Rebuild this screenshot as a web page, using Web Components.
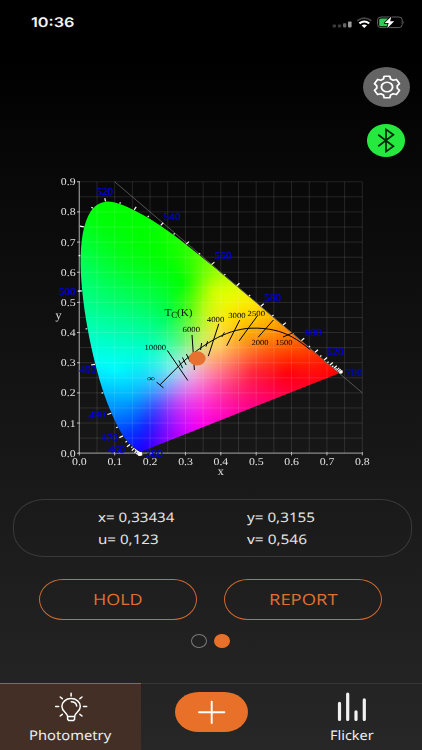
<!DOCTYPE html>
<html lang="en">
<head>
<meta charset="utf-8">
<title>Photometry</title>
<style>
    body{
        margin: 0;
        background: #000;
    }
</style>
</head>
<body>
<photometry-app></photometry-app>

<script>
/**
 * FitLabel draws one line of text stretched to a given width.
 * The bottom of the box is the baseline.
 *
 * @customElement
 */
class FitLabel extends HTMLElement{
    constructor(){
        super();
        this.attachShadow({mode: 'open'});
    }

    connectedCallback(){
        const width = this.getAttribute('width');
        const size = this.getAttribute('size') || 13.2;
        const family = this.getAttribute('family') || 'Noto Sans';
        const weight = this.getAttribute('weight') || 400;

        this.shadowRoot.innerHTML = `
            <style>
                :host{
                    display: block;
                    width: ${width}px;
                    height: ${size}px;
                }
                svg{
                    display: block;
                    overflow: visible;
                }
                text{
                    fill: currentColor;
                    font: ${weight} ${size}px "${family}", sans-serif;
                    text-rendering: geometricPrecision;
                }
            </style>
            <svg width="${width}" height="${size}">
                <text x="0" y="${size}" textLength="${width}" lengthAdjust="spacingAndGlyphs">${this.getAttribute('text')}</text>
            </svg>
        `
    }
}

customElements.define('fit-label', FitLabel)

/**
 * StatusBar shows the clock, the signal, the wifi and the battery.
 *
 * @customElement
 */
class StatusBar extends HTMLElement{
    constructor(){
        super();
        this.attachShadow({mode: 'open'});
    }

    connectedCallback(){
        const style = `
            <style>
                :host{
                    display: flex;
                    justify-content: space-between;
                    align-items: flex-start;
                    box-sizing: border-box;
                    height: 66.7px;
                    padding: 14px 17px 0 31px;
                    color: #f4f4f4;
                }
                svg{
                    display: block;
                }
            </style>
        `
        const template = `
            <fit-label text="10:36" width="43.5" size="13.3" family="Inter" weight="600"></fit-label>
            <svg width="74" height="16" viewBox="331 13.4 74 16">
                <g>
                    <rect x="332.6" y="24" width="3.4" height="2.8" rx=".8" fill="#3c3c3c"/>
                    <rect x="337.8" y="24" width="3.4" height="2.8" rx=".8" fill="#3c3c3c"/>
                    <rect x="343" y="22.7" width="3.3" height="4.1" rx=".8" fill="#666"/>
                    <rect x="348" y="20.8" width="3.6" height="6" rx=".8" fill="#999"/>
                </g>
                <g fill="none" stroke-width="1.9">
                    <path d="M357.2 20.2Q364.3 14.9 371.4 20.2" stroke="#444"/>
                    <path d="M359.4 22.8Q364.3 19 369.2 22.8" stroke="#fff" stroke-width="2.1"/>
                </g>
                <path d="M361.6 24.9Q364.3 22.8 367 24.9L364.3 27.3Z" fill="#fff"/>
                <rect x="377.6" y="16.4" width="24.6" height="10.6" rx="3.4" ry="3" fill="none" stroke="#606060"/>
                <path d="M403.4 20.4Q405 21.7 403.4 23.3Z" fill="#606060"/>
                <rect x="379.2" y="17.8" width="9.6" height="7.9" rx="1.6" fill="#34c759"/>
                <path d="M391.4 15.8L384.6 22.4H388.6L387.2 27.6L394.2 20.6H390.1Z" fill="#fff" stroke="#000" stroke-width="1.6" paint-order="stroke" stroke-linejoin="round"/>
            </svg>
        `
        this.shadowRoot.innerHTML = style + template
    }
}

customElements.define('status-bar', StatusBar)

/**
 * RoundAction is an oval icon button. The icon goes in the slot.
 *
 * @customElement
 */
class RoundAction extends HTMLElement{
    constructor(){
        super();
        this.attachShadow({mode: 'open'});
    }

    connectedCallback(){
        this.shadowRoot.innerHTML = `
            <style>
                :host{
                    display: flex;
                    align-items: center;
                    justify-content: center;
                    border-radius: 50%;
                    background: var(--action-color, #666);
                }
                ::slotted(svg){
                    display: block;
                }
            </style>
            <slot></slot>
        `
    }
}

customElements.define('round-action', RoundAction)

// CIE 1931 spectral locus: wavelength, x, y
const LOCUS = [
    [380, .1741, .0050], [400, .1733, .0048], [410, .1726, .0048], [420, .1714, .0051],
    [430, .1689, .0069], [435, .1669, .0086], [440, .1644, .0109], [445, .1611, .0138],
    [450, .1566, .0177], [455, .1510, .0227], [460, .1440, .0297], [465, .1355, .0399],
    [470, .1241, .0578], [475, .1096, .0868], [480, .0913, .1327], [485, .0687, .2007],
    [490, .0454, .2950], [495, .0235, .4127], [500, .0082, .5384], [505, .0039, .6548],
    [510, .0139, .7502], [515, .0389, .8120], [520, .0743, .8338], [525, .1142, .8262],
    [530, .1547, .8059], [535, .1929, .7816], [540, .2296, .7543], [545, .2658, .7243],
    [550, .3016, .6923], [555, .3373, .6589], [560, .3731, .6245], [565, .4087, .5896],
    [570, .4441, .5547], [575, .4788, .5202], [580, .5125, .4866], [585, .5448, .4544],
    [590, .5752, .4242], [595, .6029, .3965], [600, .6270, .3725], [605, .6482, .3514],
    [610, .6658, .3340], [615, .6801, .3197], [620, .6915, .3083], [625, .7006, .2993],
    [630, .7079, .2920], [635, .7140, .2859], [640, .7190, .2809], [645, .7230, .2770],
    [650, .7260, .2740], [660, .7300, .2700], [700, .7347, .2653]
]

// colour anchors of the diagram: left, top, r, g, b
const ANCHORS = [
    // spectral edge, from green to red
    [90, 217, 0, 255, 10], [106, 203, 0, 255, 0], [145, 217, 0, 255, 0], [187, 247, 45, 255, 0],
    [200, 256, 85, 255, 0], [213, 267, 135, 255, 0], [225, 278, 185, 255, 0], [237, 289, 225, 252, 0],
    [253, 304, 255, 228, 0], [270, 322, 255, 172, 0], [287, 336, 255, 122, 0], [303, 345, 255, 82, 0],
    [320, 356, 255, 40, 0], [338, 373, 255, 0, 0],
    // purple line
    [303, 387, 255, 0, 42], [270, 400, 255, 0, 102], [237, 413, 255, 0, 165], [203, 425, 252, 0, 228],
    [187, 431, 215, 0, 255], [165, 441, 130, 0, 255], [142, 450, 25, 0, 255],
    // blue edge, back to green
    [120, 427, 0, 80, 255], [107, 398, 0, 170, 255], [100, 378, 0, 222, 255], [92, 362, 0, 252, 245],
    [88, 345, 0, 255, 212], [84, 323, 0, 255, 172], [82, 273, 0, 255, 102], [83, 235, 0, 255, 45],
    // inside
    [120, 260, 0, 255, 30], [153, 253, 0, 255, 0], [183, 283, 0, 255, 0], [160, 290, 0, 255, 50],
    [110, 305, 0, 255, 120], [137, 320, 0, 255, 135], [165, 318, 0, 252, 95], [120, 345, 0, 255, 200],
    [145, 350, 0, 255, 205], [115, 370, 0, 250, 255], [197, 283, 90, 255, 0], [190, 310, 90, 250, 20],
    [213, 290, 205, 255, 0], [203, 308, 180, 250, 20], [230, 305, 240, 245, 0], [180, 342, 95, 245, 130],
    [202, 340, 205, 238, 95], [218, 325, 248, 228, 40], [240, 320, 255, 205, 0], [247, 335, 255, 165, 10],
    [222, 345, 255, 200, 90], [213, 357, 255, 175, 115], [253, 350, 255, 115, 35], [287, 357, 255, 50, 0],
    [287, 373, 255, 0, 10], [253, 372, 255, 35, 60], [225, 370, 255, 112, 125], [235, 388, 255, 45, 120],
    [217, 386, 255, 75, 165], [207, 375, 250, 135, 180], [193, 385, 235, 130, 225],
    [190, 370, 225, 190, 225], [185, 360, 185, 228, 210], [170, 368, 120, 235, 235],
    [153, 378, 55, 205, 255], [130, 395, 0, 180, 255], [168, 388, 135, 150, 250],
    [183, 398, 215, 85, 240], [170, 405, 155, 65, 250], [153, 408, 55, 75, 255],
    [147, 425, 25, 35, 255], [130, 418, 0, 105, 255], [213, 405, 255, 35, 195], [193, 412, 235, 30, 240]
]

// text, left, baseline
const WAVE_LABELS = [
    ['520', 96, 195], ['540', 163.3, 219.8], ['560', 214.3, 258.8], ['580', 264, 301.4],
    ['600', 304.4, 336.2], ['620', 326.6, 355.2], ['700', 345.3, 376.2], ['500', 58.4, 294.5],
    ['490', 79.2, 373.2], ['480', 88.4, 418.2], ['470', 101, 441.4], ['460', 108, 452.8],
    ['380', 145.6, 457.2]
]

// text, left, baseline, width
const TEMP_LABELS = [
    ['10000', 144.5, 350.4, 21.6], ['6000', 182.6, 332.2, 17.4], ['4000', 206.8, 322, 17.6],
    ['3000', 228.2, 317.6, 17.4], ['2500', 247.6, 315.6, 17.4], ['2000', 251.4, 344.9, 17],
    ['1500', 275.4, 344.9, 17], ['∞', 146.8, 380.6, 8.4]
]

const ORIGIN_X = 79.3
const ORIGIN_Y = 453.2
const SCALE_X = 353.75
const SCALE_Y = 301.6
const TOP = 170

const toX = x => ORIGIN_X + x * SCALE_X
const toY = y => ORIGIN_Y - y * SCALE_Y

/**
 * Finds the weights that blend the anchors by distance.
 * Solves the system for the three channels at once.
 *
 * @returns {number[][]} one [r, g, b] weight for each anchor
 */
function anchorWeights(){
    const n = ANCHORS.length
    const rows = ANCHORS.map(a => [
        ...ANCHORS.map(b => Math.hypot(a[0] - b[0], a[1] - b[1])),
        a[2], a[3], a[4]
    ])
    for (let c = 0; c < n; c++) {
        let best = c
        for (let r = c + 1; r < n; r++) {
            if (Math.abs(rows[r][c]) > Math.abs(rows[best][c])) best = r
        }
        [rows[c], rows[best]] = [rows[best], rows[c]]
        for (let r = 0; r < n; r++) {
            if (r === c) continue
            const f = rows[r][c] / rows[c][c]
            for (let k = c; k < n + 3; k++) rows[r][k] -= f * rows[c][k]
        }
    }
    return rows.map((row, i) => [row[n] / row[i], row[n + 1] / row[i], row[n + 2] / row[i]])
}

/**
 * ChromaticityChart draws the CIE xy diagram with the measured point.
 * The colours are painted on a canvas, the axes and texts lie over it.
 *
 * @customElement
 */
class ChromaticityChart extends HTMLElement{
    constructor(){
        super();
        this.attachShadow({mode: 'open'});
    }

    connectedCallback(){
        const style = `
            <style>
                :host{
                    display: grid;
                    width: 422px;
                    height: 310px;
                }
                canvas, svg{
                    grid-area: 1 / 1;
                    display: block;
                    width: 422px;
                    height: 310px;
                }
                svg{
                    z-index: 1;
                }
                svg.back{
                    z-index: 0;
                }
                text{
                    font-family: "Liberation Serif", serif;
                    text-rendering: geometricPrecision;
                }
            </style>
        `
        const template = `
            <svg class="back" viewBox="0 ${TOP} 422 310">${this.grid()}</svg>
            <canvas width="422" height="310"></canvas>
            <svg viewBox="0 ${TOP} 422 310">
                ${this.axisLabels()}
                ${this.ticks()}
                ${this.planckian()}
                ${this.labels()}
                <ellipse cx="197.2" cy="358.4" rx="8.4" ry="7.1" fill="#e87030"/>
            </svg>
        `
        this.shadowRoot.innerHTML = style + template
        this.paint(this.shadowRoot.querySelector('canvas'))
    }

    grid(){
        let lines = ''
        for (let i = 1; i <= 16; i++) {
            lines += `<path d="M${toX(i * .05)} ${toY(.9)}V${toY(0)}"/>`
        }
        for (let i = 1; i <= 18; i++) {
            lines += `<path d="M${toX(0)} ${toY(i * .05)}H${toX(.8)}"/>`
        }
        return `
            <g stroke="#fff" stroke-opacity=".13" stroke-width=".9">${lines}</g>
            <path d="M${toX(.1)} ${toY(.9)}L${toX(.8)} ${toY(.2)}" stroke="#666" stroke-width=".8"/>
            <path d="M${toX(0)} ${toY(.9)}V${toY(0)}H${toX(.8)}" fill="none" stroke="#8a8a8a" stroke-width="1.3"/>
        `
    }

    axisLabels(){
        let out = ''
        for (let i = 0; i <= 9; i++) {
            const y = toY(i / 10)
            out += `<path d="M77 ${y}H80" stroke="#bbb"/>`
            out += `<text x="60.8" y="${y + 3.5}" textLength="14.8" lengthAdjust="spacingAndGlyphs">0.${i}</text>`
        }
        for (let i = 0; i <= 8; i++) {
            const x = toX(i / 10)
            out += `<path d="M${x} 452V455.4" stroke="#bbb"/>`
            out += `<text x="${x - 7.3}" y="465.4" textLength="14.8" lengthAdjust="spacingAndGlyphs">0.${i}</text>`
        }
        return `
            <g fill="#e0e0e0" font-size="10.4">
                ${out}
                <text x="217.8" y="474.6" font-size="12" textLength="6" lengthAdjust="spacingAndGlyphs">x</text>
                <text x="55.6" y="318.8" font-size="12" textLength="6" lengthAdjust="spacingAndGlyphs">y</text>
            </g>
        `
    }

    /**
     * Marks along the locus, one each 5 nm and a longer one each 10 nm.
     *
     * @returns {string}
     */
    ticks(){
        let out = ''
        LOCUS.forEach(([nm, x, y], i) => {
            const a = LOCUS[Math.max(i - 1, 0)]
            const b = LOCUS[Math.min(i + 1, LOCUS.length - 1)]
            let nx = -(b[2] - a[2])
            let ny = b[1] - a[1]
            const len = Math.hypot(nx, ny) || 1
            const size = nm % 10 ? .006 : .0125
            nx = nx / len
            ny = ny / len
            out += `<path d="M${toX(x + nx * .001)} ${toY(y + ny * .001)}L${toX(x + nx * size)} ${toY(y + ny * size)}"/>`
        })
        return `
            <g stroke="#fff" stroke-width="1.2">${out}</g>
            <circle cx="341" cy="372" r="1.8" fill="#fff"/>
            <circle cx="139.6" cy="454.2" r="1.9" fill="#fff"/>
        `
    }

    planckian(){
        return `
            <g fill="none" stroke="#000" stroke-width="1">
                <path d="M160 384.8L178.5 366.2C186 358.6 198 348.8 213.9 339.6C224 333.8 238 328.6 251 328.2C268 327.6 281 331 291 336.4C298 340 304.5 345 310.2 349.6"/>
                <path d="M156.6 382.2L163.4 387.8"/>
                <path d="M167.3 350.4L187.8 380.5"/>
                <path d="M192 335L194.4 370"/>
                <path d="M218.8 323.8L208.3 356.2"/>
                <path d="M239.8 320L226.7 345.8"/>
                <path d="M257.4 315.8L239 341"/>
                <path d="M273.4 320L258.2 337.2"/>
                <path d="M294.4 332.2L283 337"/>
                <path d="M178.8 360.4L182.6 368.2M182.4 357.4L186.2 365M186.4 354L190.2 361.8M201.6 343L200.6 350M207.6 341.2L206 346.6M224.4 332.4L221.8 337"/>
            </g>
        `
    }

    labels(){
        const waves = WAVE_LABELS.map(([text, x, y]) =>
            `<text x="${x}" y="${y}" textLength="17" lengthAdjust="spacingAndGlyphs">${text}</text>`).join('')
        const temps = TEMP_LABELS.map(([text, x, y, w]) =>
            `<text x="${x}" y="${y}" textLength="${w}" lengthAdjust="spacingAndGlyphs">${text}</text>`).join('')
        return `
            <g fill="#0000e0" stroke="#0000e0" stroke-width=".25" font-size="10.6">${waves}</g>
            <g fill="#000" font-size="7.8">${temps}</g>
            <g fill="#000" fill-opacity=".9" font-size="10.6">
                <text x="164.4" y="315.6" textLength="7" lengthAdjust="spacingAndGlyphs">T</text>
                <text x="171.2" y="317.6" font-size="9.4" textLength="6" lengthAdjust="spacingAndGlyphs">C</text>
                <text x="177" y="315.6" textLength="15.4" lengthAdjust="spacingAndGlyphs">(K)</text>
            </g>
        `
    }

    /**
     * Blends the anchors over the canvas and keeps only what lies in the locus.
     *
     * @param {HTMLCanvasElement} canvas
     * @returns {void}
     */
    paint(canvas){
        const ctx = canvas.getContext('2d')
        const image = ctx.createImageData(canvas.width, canvas.height)
        const weights = anchorWeights()

        for (let py = 28; py < 290; py++) {
            for (let px = 76; px < 346; px++) {
                let r = 0, g = 0, b = 0
                for (let i = 0; i < ANCHORS.length; i++) {
                    const dx = px - ANCHORS[i][0]
                    const dy = py + TOP - ANCHORS[i][1]
                    const d = Math.sqrt(dx * dx + dy * dy)
                    r += d * weights[i][0]
                    g += d * weights[i][1]
                    b += d * weights[i][2]
                }
                const at = (py * canvas.width + px) * 4
                image.data[at] = r
                image.data[at + 1] = g
                image.data[at + 2] = b
                image.data[at + 3] = 255
            }
        }
        ctx.putImageData(image, 0, 0)
        ctx.filter = 'blur(2px)'
        ctx.drawImage(canvas, 0, 0)
        ctx.filter = 'none'

        ctx.globalCompositeOperation = 'destination-in'
        ctx.beginPath()
        const pts = LOCUS.map(([, x, y]) => [toX(x), toY(y) - TOP])
        ctx.moveTo(...pts[0])
        for (let i = 1; i < pts.length - 1; i++) {
            // smooth through the middle of each pair
            const a = pts[i - 1], b = pts[i], c = pts[i + 1], d = pts[Math.min(i + 2, pts.length - 1)]
            if (i === 1) ctx.lineTo(...b)
            ctx.bezierCurveTo(
                b[0] + (c[0] - a[0]) / 6, b[1] + (c[1] - a[1]) / 6,
                c[0] - (d[0] - b[0]) / 6, c[1] - (d[1] - b[1]) / 6,
                c[0], c[1])
        }
        ctx.closePath()
        ctx.fill()
    }
}

customElements.define('chromaticity-chart', ChromaticityChart)

/**
 * ReadingPanel is the rounded frame round the measured values.
 *
 * @customElement
 */
class ReadingPanel extends HTMLElement{
    constructor(){
        super();
        this.attachShadow({mode: 'open'});
    }

    connectedCallback(){
        this.shadowRoot.innerHTML = `
            <style>
                :host{
                    display: grid;
                    grid-template-columns: 149px 1fr;
                    grid-auto-rows: 13.2px;
                    row-gap: 8.6px;
                    box-sizing: border-box;
                    height: 57.5px;
                    margin: 19.3px 10.4px 0 12.8px;
                    padding: 9.2px 0 0 84.2px;
                    border: 1px solid #393939;
                    border-radius: 31px / 26px;
                    color: #e4e4e4;
                }
            </style>
            <slot></slot>
        `
    }
}

customElements.define('reading-panel', ReadingPanel)

/**
 * PillButton is the outlined orange button.
 *
 * @customElement
 */
class PillButton extends HTMLElement{
    constructor(){
        super();
        this.attachShadow({mode: 'open'});
    }

    connectedCallback(){
        this.shadowRoot.innerHTML = `
            <style>
                :host{
                    display: flex;
                    justify-content: center;
                    box-sizing: border-box;
                    width: 157.6px;
                    height: 41.4px;
                    padding-top: 9.8px;
                    border: 1.2px solid #d4692f;
                    border-radius: 24px / 20.7px;
                    color: #e0702f;
                }
            </style>
            <slot></slot>
        `
    }
}

customElements.define('pill-button', PillButton)

/**
 * PageDots shows which page of the readings is open.
 *
 * @customElement
 */
class PageDots extends HTMLElement{
    constructor(){
        super();
        this.attachShadow({mode: 'open'});
    }

    connectedCallback(){
        this.shadowRoot.innerHTML = `
            <style>
                :host{
                    display: flex;
                    justify-content: center;
                    gap: 6.8px;
                    margin: 13.9px 1.4px 0 0;
                }
                i{
                    box-sizing: border-box;
                    width: 15.8px;
                    height: 13.8px;
                    border: 1.3px solid #7a7a7a;
                    border-radius: 50%;
                }
                .on{
                    background: #e87029;
                    border-color: #e87029;
                }
            </style>
            <i></i><i class="on"></i>
        `
    }
}

customElements.define('page-dots', PageDots)

/**
 * TabItem is one entry of the bottom bar: an icon over a label.
 *
 * @customElement
 */
class TabItem extends HTMLElement{
    constructor(){
        super();
        this.attachShadow({mode: 'open'});
    }

    connectedCallback(){
        this.shadowRoot.innerHTML = `
            <style>
                :host{
                    display: flex;
                    flex-direction: column;
                    align-items: center;
                    gap: 5.5px;
                    box-sizing: border-box;
                    padding-top: 8px;
                    border-top: 1.3px solid #363636;
                    color: #eee;
                }
                :host([active]){
                    background: #432f26;
                    border-top-color: #b65a28;
                }
                ::slotted(svg){
                    display: block;
                }
            </style>
            <slot name="icon"></slot>
            <slot></slot>
        `
    }
}

customElements.define('tab-item', TabItem)

/**
 * PhotometryApp puts the whole screen together.
 *
 * @customElement
 */
class PhotometryApp extends HTMLElement{
    constructor(){
        super();
        this.attachShadow({mode: 'open'});
    }

    connectedCallback(){
        const style = `
            <style>
                :host{
                    display: flex;
                    flex-direction: column;
                    width: 422px;
                    height: 750px;
                    overflow: hidden;
                    background: linear-gradient(#000 0, #000 60px, #080808 170px, #272727 750px);
                }
                .actions{
                    display: flex;
                    flex-direction: column;
                    align-items: flex-end;
                    gap: 17.2px;
                    height: 103.3px;
                    padding-right: 11.8px;
                }
                .gear{
                    width: 47px;
                    height: 40px;
                    --action-color: #646464;
                }
                .bluetooth{
                    width: 38.6px;
                    height: 33.2px;
                    margin-right: 5px;
                    --action-color: #25e93f;
                }
                .buttons{
                    display: flex;
                    gap: 27.2px;
                    margin: 22.3px 0 0 39.4px;
                }
                nav{
                    display: grid;
                    grid-template-columns: 141px 140px 141px;
                    height: 67.3px;
                    margin-top: auto;
                }
                .pill{
                    width: 73px;
                    height: 40.6px;
                    border-radius: 24px / 20.3px;
                    background: #e87029;
                }
            </style>
        `
        const template = `
            <status-bar></status-bar>
            <div class="actions">
                <round-action class="gear">
                    <svg width="28" height="24" viewBox="0 0 24 24" preserveAspectRatio="none" fill="none" stroke="#fff" stroke-width="1.6" stroke-linejoin="round">
                        <path d="M9.6 1.2H14.4L15.1 4L17.3 5.2L20 4.4L22.7 8.6L20.8 10.7V13.3L22.7 15.4L20 19.6L17.3 18.8L15.1 20L14.4 22.8H9.6L8.9 20L6.7 18.8L4 19.6L1.3 15.4L3.2 13.3V10.7L1.3 8.6L4 4.4L6.7 5.2L8.9 4Z"/>
                        <circle cx="12" cy="12" r="4.8"/>
                    </svg>
                </round-action>
                <round-action class="bluetooth">
                    <svg width="18" height="25" viewBox="0 0 18 25" fill="none" stroke="#06280b" stroke-width="1.7">
                        <path d="M1.2 6.8L16.4 18.2L9 23.6V1.4L16.4 6.8L1.2 18.2"/>
                    </svg>
                </round-action>
            </div>
            <chromaticity-chart></chromaticity-chart>
            <reading-panel>
                <fit-label text="x= 0,33434" width="76.4"></fit-label>
                <fit-label text="y= 0,3155" width="68"></fit-label>
                <fit-label text="u= 0,123" width="60.6"></fit-label>
                <fit-label text="v= 0,546" width="60"></fit-label>
            </reading-panel>
            <div class="buttons">
                <pill-button><fit-label text="HOLD" width="49.6" size="15.4" family="Open Sans"></fit-label></pill-button>
                <pill-button><fit-label text="REPORT" width="68.6" size="15.4" family="Open Sans"></fit-label></pill-button>
            </div>
            <page-dots></page-dots>
            <nav>
                <tab-item active>
                    <svg slot="icon" width="34" height="30" viewBox="53.3 691 34 30" fill="none" stroke="#fff" stroke-width="1.5" stroke-linecap="round" stroke-linejoin="round">
                        <path d="M70.4 692.3V694.9M59.5 696L61.6 697.7M81.3 696L79.2 697.7M54.9 705.5H58M82.8 705.5H86M59.5 715L61.6 713.3M81.3 715L79.2 713.3"/>
                        <path d="M66.9 715.4C66.9 711.8 61.2 710.8 61.2 705.4C61.2 700.9 65.2 697.6 70.4 697.6S79.6 700.9 79.6 705.4C79.6 710.8 73.9 711.8 73.9 715.4Z"/>
                        <path d="M70.6 700.8C73.4 700.8 75.6 702.5 76 705"/>
                        <path d="M66.9 715.4V718.2L68 719.5H72.8L73.9 718.2V715.4"/>
                    </svg>
                    <fit-label text="Photometry" width="82.2"></fit-label>
                </tab-item>
                <tab-item>
                    <div slot="icon" class="pill">
                        <svg width="73" height="40.6" viewBox="0 0 73 40.6" stroke="#fff" stroke-width="1.9" stroke-linecap="round">
                            <path d="M24 20.3H49.4M36.7 9.6V31"/>
                        </svg>
                    </div>
                </tab-item>
                <tab-item>
                    <svg slot="icon" width="30" height="30" viewBox="336.5 691 30 30" stroke="#f2f2f2" stroke-width="3.2" stroke-linecap="round">
                        <path d="M339 702.4V718.5M347.2 693V718.5M355.5 710.8V718.5M363.8 698.8V718.5"/>
                    </svg>
                    <fit-label text="Flicker" width="43.6"></fit-label>
                </tab-item>
            </nav>
        `
        this.shadowRoot.innerHTML = style + template
    }
}

customElements.define('photometry-app', PhotometryApp)
</script>
</body>
</html>
